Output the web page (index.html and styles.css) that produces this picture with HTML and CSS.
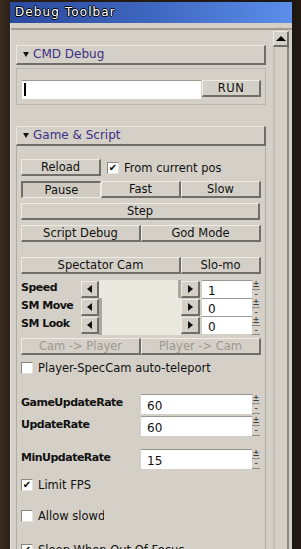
FILE: index.html
```html
<!DOCTYPE html>
<html lang="en">
<head>
  <meta charset="UTF-8">
  <title>Debug Toolbar</title>
  <link rel="stylesheet" href="styles.css">
</head>
<body>
  <div class="window">
    <div class="titlebar">Debug Toolbar</div>
    <div class="frame">
      <div class="inner">
        <div class="content">

          <div class="section-head"><span class="caret"></span>CMD Debug</div>
          <div class="cmd-body">
            <div class="cmd-row">
              <div class="text-input"><span class="cursor"></span></div>
              <button class="btn run">RUN</button>
            </div>
          </div>

          <div class="section-head game"><span class="caret"></span>Game &amp; Script</div>
          <div class="section-body">
            <div class="row reload-row">
              <button class="btn reload">Reload</button>
              <label class="check"><span class="box checked">✔</span>From current pos</label>
            </div>
            <div class="row three">
              <button class="btn pressed">Pause</button>
              <button class="btn">Fast</button>
              <button class="btn">Slow</button>
            </div>
            <div class="row">
              <button class="btn full">Step</button>
            </div>
            <div class="row two">
              <button class="btn">Script Debug</button>
              <button class="btn">God Mode</button>
            </div>

            <div class="row spec">
              <button class="btn">Spectator Cam</button>
              <button class="btn">Slo-mo</button>
            </div>
            <div class="sliders">
              <div class="slider-row">
                <span class="lbl">Speed</span>
                <span class="arrow left"></span>
                <span class="track"><i class="thumb end"></i></span>
                <span class="arrow right"></span>
                <span class="num">1</span>
                <span class="spin"><i>±</i><i>-</i></span>
              </div>
              <div class="slider-row">
                <span class="lbl">SM Move</span>
                <span class="arrow left"></span>
                <span class="track"><i class="thumb"></i></span>
                <span class="arrow right"></span>
                <span class="num">0</span>
                <span class="spin"><i>±</i><i>-</i></span>
              </div>
              <div class="slider-row">
                <span class="lbl">SM Look</span>
                <span class="arrow left"></span>
                <span class="track"><i class="thumb"></i></span>
                <span class="arrow right"></span>
                <span class="num">0</span>
                <span class="spin"><i>±</i><i>-</i></span>
              </div>
            </div>
            <div class="row two cam">
              <button class="btn disabled">Cam -&gt; Player</button>
              <button class="btn disabled">Player -&gt; Cam</button>
            </div>
            <label class="check solo"><span class="box"></span>Player-SpecCam auto-teleport</label>

            <div class="rate first">
              <span class="lbl">GameUpdateRate</span>
              <span class="field">60</span>
              <span class="spin tall"><i>±</i><i>-</i></span>
            </div>
            <div class="rate">
              <span class="lbl">UpdateRate</span>
              <span class="field">60</span>
              <span class="spin tall"><i>±</i><i>-</i></span>
            </div>
            <div class="rate min">
              <span class="lbl">MinUpdateRate</span>
              <span class="field">15</span>
              <span class="spin tall"><i>±</i><i>-</i></span>
            </div>

            <label class="check solo fps"><span class="box checked">✔</span>Limit FPS</label>
            <label class="check solo slow"><span class="box"></span><span class="clip">Allow slowdown</span></label>
            <label class="check solo sleep"><span class="box checked">✔</span>Sleep When Out Of Focus</label>
          </div>

        </div>
        <div class="scrollbar">
          <div class="scroll-up"><span></span></div>
          <div class="scroll-track"></div>
        </div>
      </div>
    </div>
  </div>
</body>
</html>
```

FILE: styles.css
```css
body {
  margin: 0;
  width: 301px;
  height: 549px;
  overflow: hidden;
  background: linear-gradient(90deg, #3b2c20 0, #2a1f17 10px, #1c1611 292px, #241a13 301px);
  font-family: "DejaVu Sans", Verdana, sans-serif;
  font-size: 11.5px;
  color: #111;
}

.window {
  margin: 2px 0 0 10px;
  width: 282px;
}

.titlebar {
  height: 21px;
  line-height: 21px;
  padding-left: 5px;
  background: linear-gradient(90deg, #2a4a9e 0, #3f67bf 50%, #5b8eea 100%);
  color: #fff;
  font-size: 12px;
  letter-spacing: 1.1px;
  text-shadow: 1px 0 0 #000, -1px 0 0 #000, 0 1px 0 #000, 0 -1px 0 #000;
}

.frame {
  background: #d4d0c7;
  padding-top: 5px;
  height: 530px;
  border-left: 1px solid #e6e3dc;
  box-sizing: border-box;
}

.inner {
  border-top: 2px solid #a19d95;
  display: flex;
  height: 100%;
}

.content {
  width: 250px;
  margin-left: 5px;
  padding-top: 15px;
}

/* section headers */
.section-head {
  height: 20px;
  box-sizing: border-box;
  border: 1px solid;
  border-width: 1px 2px 2px 1px;
  border-color: #ebe8e1 #6f6d68 #6f6d68 #ebe8e1;
  color: #3a2f86;
  font-size: 12px;
  line-height: 17px;
  padding-left: 6px;
  display: flex;
  align-items: center;
}

.caret {
  width: 0;
  height: 0;
  border-left: 3px solid transparent;
  border-right: 3px solid transparent;
  border-top: 5px solid #111;
  margin-right: 4px;
}

.cmd-body {
  margin-top: 3px;
  height: 37px;
  box-sizing: border-box;
  border: 1px solid #bbb8b0;
  padding: 11px 0 0 5px;
}

.cmd-row {
  display: flex;
  align-items: flex-start;
}

.text-input {
  width: 179px;
  height: 19px;
  box-sizing: border-box;
  background: #fff;
  border-top: 1px solid #9a978f;
  padding: 2px 0 0 2px;
}

.cursor {
  display: block;
  width: 2px;
  height: 13px;
  background: #000;
}

.game {
  margin-top: 21px;
}

.section-body {
  border-left: 1px solid #b0ada5;
  border-right: 1px solid #b0ada5;
  padding: 13px 5px 0 4px;
  height: 420px;
}

/* buttons */
.btn {
  font-family: "DejaVu Sans", Verdana, sans-serif;
  font-size: 11.5px;
  color: #111;
  background: #d4d0c7;
  height: 17px;
  padding: 0;
  margin: 0;
  box-sizing: border-box;
  border: 1px solid;
  border-width: 1px 2px 2px 1px;
  border-color: #eeebe4 #706e69 #706e69 #eeebe4;
  line-height: 13px;
}

.btn.pressed {
  border-width: 2px 1px 1px 2px;
  border-color: #706e69 #eeebe4 #eeebe4 #706e69;
  background: #cfcbc1;
}

.btn.disabled {
  color: #9c9991;
}

.run {
  width: 59px;
  margin-left: 1px;
  letter-spacing: 0.5px;
}

.row {
  display: grid;
  margin-bottom: 5px;
}

.row.three {
  grid-template-columns: 80px 80px 80px;
}

.row.two {
  grid-template-columns: 120px 120px;
}

.row.spec {
  grid-template-columns: 160px 80px;
  margin-top: 15px;
  margin-bottom: 6px;
}

.row.cam {
  margin-top: 4px;
  margin-bottom: 6px;
}

.reload-row {
  display: flex;
  align-items: center;
}

.reload {
  width: 80px;
}

/* checkboxes */
.check {
  display: flex;
  align-items: center;
  margin-left: 6px;
}

.check.solo {
  margin-left: 0;
}

.box {
  width: 12px;
  height: 12px;
  box-sizing: border-box;
  background: #fff;
  border: 1px solid;
  border-color: #8a877f #e6e3dc #e6e3dc #8a877f;
  margin-right: 5px;
  font-size: 10px;
  line-height: 10px;
  text-align: center;
  color: #000;
}

.fps {
  margin-top: 9px;
}

.slow {
  margin-top: 17px;
}

.clip {
  width: 66px;
  overflow: hidden;
  white-space: nowrap;
}

.sleep {
  margin-top: 20px;
}

/* sliders */
.slider-row {
  display: grid;
  grid-template-columns: 60px 18px 82px 19px 2px 50px 8px;
  height: 18px;
}

.lbl {
  line-height: 16px;
  font-size: 11px;
  font-weight: 600;
  letter-spacing: -0.5px;
}

.arrow {
  margin: 1px 0;
  box-sizing: border-box;
  border: 1px solid;
  border-width: 1px 2px 2px 1px;
  border-color: #eeebe4 #706e69 #706e69 #eeebe4;
  display: flex;
  align-items: center;
  justify-content: center;
}

.arrow.left::after {
  content: "";
  border-top: 4px solid transparent;
  border-bottom: 4px solid transparent;
  border-right: 5px solid #111;
}

.arrow.right::after {
  content: "";
  border-top: 4px solid transparent;
  border-bottom: 4px solid transparent;
  border-left: 5px solid #111;
}

.track {
  background: #ebe8df;
  position: relative;
}

.thumb {
  position: absolute;
  top: 0;
  bottom: 0;
  left: 0;
  width: 3px;
  background: #aaa79f;
}

.thumb.end {
  left: auto;
  right: 0;
}

.num {
  grid-column: 6;
  background: #fff;
  border-top: 1px solid #9a978f;
  padding: 3px 0 0 6px;
  font-size: 12px;
  line-height: 14px;
  margin-bottom: 1px;
}

.spin {
  display: flex;
  flex-direction: column;
  background: #d4d0c7;
  font-size: 9px;
  line-height: 8px;
  text-align: center;
}

.spin i {
  font-style: normal;
  flex: 1;
  border-bottom: 1px solid #8d8a83;
}

/* rate fields */
.rate {
  display: grid;
  grid-template-columns: 120px 111px 8px;
  height: 20px;
  margin-bottom: 2px;
}

.rate.first {
  margin-top: 19px;
}

.rate.min {
  margin-top: 13px;
}

.rate .lbl {
  line-height: 18px;
}

.field {
  background: #fff;
  border-top: 1px solid #9a978f;
  padding: 3px 0 0 6px;
  font-size: 12px;
  line-height: 16px;
}

.spin.tall {
  line-height: 9px;
}

/* scrollbar */
.scrollbar {
  width: 16px;
  margin-left: 7px;
  margin-top: 1px;
  display: flex;
  flex-direction: column;
}

.scroll-up {
  height: 16px;
  box-sizing: border-box;
  border: 1px solid;
  border-width: 1px 2px 2px 1px;
  border-color: #eeebe4 #706e69 #706e69 #eeebe4;
  display: flex;
  align-items: center;
  justify-content: center;
}

.scroll-up span {
  border-left: 5px solid transparent;
  border-right: 5px solid transparent;
  border-bottom: 5px solid #000;
}

.scroll-track {
  flex: 1;
  border-left: 2px solid #c2bfb7;
  border-right: 2px solid #8a877f;
}
```
